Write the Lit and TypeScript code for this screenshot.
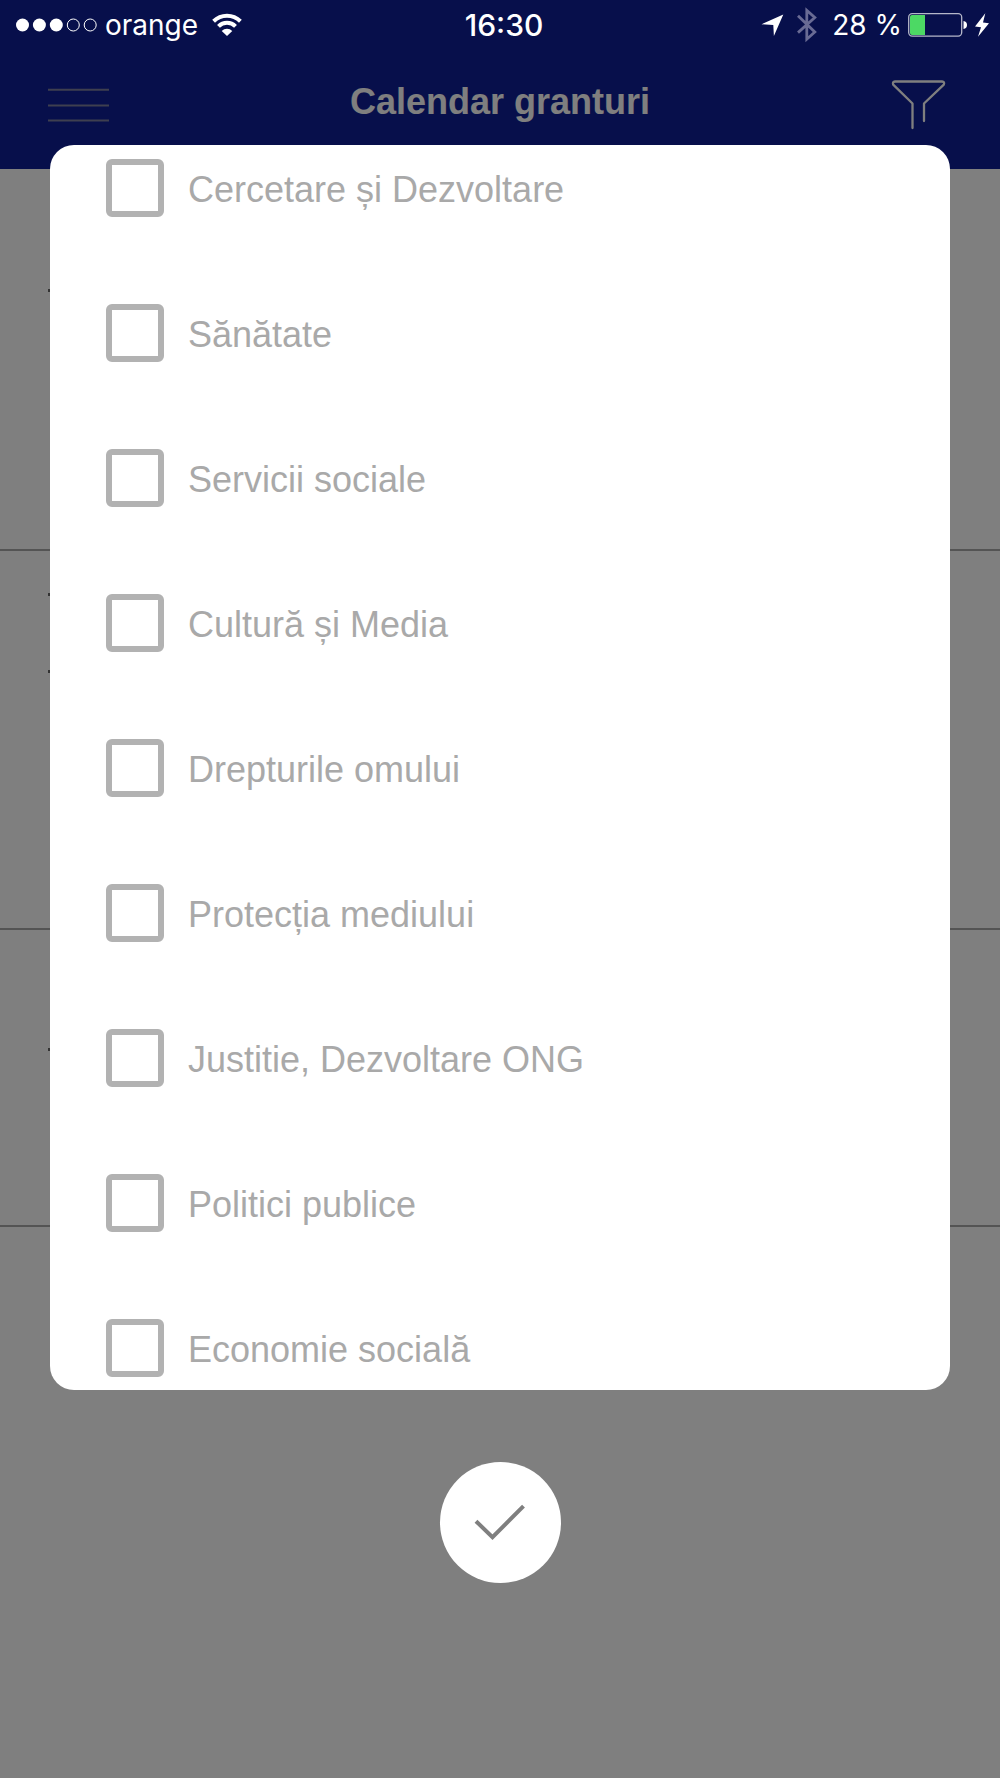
import { LitElement, html, css } from "lit";
import { customElement, property, state } from "lit/decorators.js";

@customElement("status-bar")
class StatusBar extends LitElement {
  static styles = css`
    :host {
      display: grid;
      grid-template-columns: 1fr auto 1fr;
      align-items: center;
      height: 50px;
      padding: 0 11px 0 16px;
      box-sizing: border-box;
      color: #fff;
      font: 400 28px/50px Inter, Roboto, sans-serif;
    }
    .side {
      display: flex;
      align-items: center;
    }
    .end {
      justify-content: flex-end;
    }
    .carrier {
      margin: 0 14px 0 8px;
    }
    .time {
      padding-left: 3px;
      font-size: 30px;
      font-weight: 500;
    }
    .bluetooth {
      margin: 0 14px 0 12px;
    }
    .battery {
      margin: 0 7px 0 6px;
    }
    svg {
      display: block;
      flex: none;
    }
  `;

  render() {
    return html`
      <div class="side">
        <svg width="81" height="14" viewBox="0 0 81 14" aria-label="Semnal">
          <g fill="#fff">
            <circle cx="6.5" cy="7" r="6.5" />
            <circle cx="23.4" cy="7" r="6.5" />
            <circle cx="40.3" cy="7" r="6.5" />
          </g>
          <g fill="none" stroke="#fff" stroke-width="1">
            <circle cx="57.3" cy="7" r="6" />
            <circle cx="74.2" cy="7" r="6" />
          </g>
        </svg>
        <span class="carrier">orange</span>
        <svg width="30" height="24" viewBox="0 0 30 24" aria-label="Wi-Fi">
          <g fill="none" stroke="#fff" stroke-width="4">
            <path d="M1.6 8.2A19.2 19.2 0 0 1 28.4 8.2" />
            <path d="M6.5 13.4A12 12 0 0 1 23.5 13.4" />
          </g>
          <path d="M15 23L9.7 17.9A7.6 7.6 0 0 1 20.3 17.9Z" fill="#fff" />
        </svg>
      </div>
      <span class="time">16:30</span>
      <div class="side end">
        <svg width="23" height="23" viewBox="0 0 23 23" aria-label="Localizare">
          <path d="M.5 10.3L22.3 .5L12.9 22L12.3 11Z" fill="#fff" />
        </svg>
        <svg class="bluetooth" width="22" height="36" viewBox="0 0 22 36" aria-label="Bluetooth">
          <path d="M2 8.7L18.8 25L10.8 32.2V3.4L18.8 10.5L2 25.6" fill="none" stroke="#696b94" stroke-width="2.8" />
        </svg>
        <span>28 %</span>
        <svg class="battery" width="60" height="24" viewBox="0 0 60 24" aria-label="Baterie">
          <rect x=".7" y=".7" width="53" height="22.4" rx="3.5" fill="none" stroke="#b5b7c9" stroke-width="1.3" />
          <path d="M4 2H17V22H4Q2 22 2 20V4Q2 2 4 2Z" fill="#4cd964" />
          <path d="M55.5 8Q59 8.5 59 12T55.5 16Z" fill="#fff" />
        </svg>
        <svg width="14" height="24" viewBox="0 0 14 24" aria-label="Se incarca">
          <path d="M10.3 .3L0 13.4L6 14.2L3 23.7L14 10.3L8 9.6Z" fill="#fff" />
        </svg>
      </div>
    `;
  }
}

@customElement("filter-option")
class FilterOption extends LitElement {
  @property() label = "";

  static styles = css`
    :host {
      display: block;
    }
    .option {
      display: flex;
      align-items: center;
      gap: 24px;
      color: #a9a9a9;
      font: 36px/54px "Liberation Sans", Arial, sans-serif;
    }
    .box {
      appearance: none;
      flex: none;
      box-sizing: border-box;
      width: 58px;
      height: 58px;
      margin: 0;
      border: 6px solid #b2b2b2;
      border-radius: 6px;
      background: #fff;
    }
    .box:checked {
      background: #b2b2b2;
    }
    .text {
      padding-top: 4px;
    }
  `;

  render() {
    return html`
      <label class="option">
        <input class="box" type="checkbox" />
        <span class="text">${this.label}</span>
      </label>
    `;
  }
}

@customElement("app-root")
class AppRoot extends LitElement {
  @state() private options = [
    "Cercetare și Dezvoltare",
    "Sănătate",
    "Servicii sociale",
    "Cultură și Media",
    "Drepturile omului",
    "Protecția mediului",
    "Justitie, Dezvoltare ONG",
    "Politici publice",
    "Economie socială",
  ];

  static styles = css`
    :host {
      display: block;
      position: relative;
      min-height: 100vh;
      background: #fff;
      font-family: "Liberation Sans", Arial, sans-serif;
    }
    .top {
      background: #0f1f96;
      padding-bottom: 15px;
    }
    .status {
      position: relative;
      z-index: 2;
    }
    .nav {
      display: grid;
      grid-template-columns: 1fr auto 1fr;
      align-items: center;
      height: 104px;
      padding: 0 54px 0 48px;
    }
    .title {
      margin: 0;
      padding-left: 6px;
      color: #fff;
      font: bold 36px/100px "Liberation Sans", Arial, sans-serif;
    }
    button {
      display: block;
      padding: 0;
      border: 0;
      background: none;
      cursor: pointer;
    }
    svg {
      display: block;
    }
    .menu,
    .filter {
      padding-top: 5px;
    }
    .filter {
      justify-self: end;
    }
    .entry {
      box-sizing: border-box;
      display: flex;
      flex-direction: column;
      gap: 74px;
      height: 379px;
      padding: 42px 48px 0;
      border-bottom: 2px solid #a8a8a8;
    }
    .single {
      height: 382px;
      padding-top: 120px;
    }
    .short {
      height: 297px;
      padding-top: 118px;
    }
    .mark {
      width: 3px;
      height: 3px;
      background: #666;
    }
    .overlay {
      position: absolute;
      inset: 0;
      z-index: 1;
      display: flex;
      flex-direction: column;
      align-items: center;
      gap: 72px;
      padding: 145px 50px 0;
      background: rgba(0, 0, 0, 0.5);
    }
    .panel {
      align-self: stretch;
      display: flex;
      flex-direction: column;
      gap: 87px;
      padding: 14px 56px 13px;
      border-radius: 24px;
      background: #fff;
    }
    .confirm {
      display: grid;
      place-items: center;
      width: 121px;
      height: 121px;
      border-radius: 50%;
      background: #fff;
    }
  `;

  render() {
    return html`
      <header class="top">
        <status-bar class="status"></status-bar>
        <div class="nav">
          <button class="menu" aria-label="Meniu">
            <svg width="61" height="36" viewBox="0 0 61 36">
              <path d="M0 2.7H61M0 18.5H61M0 33.5H61" stroke="#7c7f9f" stroke-width="2" />
            </svg>
          </button>
          <h1 class="title">Calendar granturi</h1>
          <button class="filter" aria-label="Filtru">
            <svg width="55" height="50" viewBox="0 0 55 50">
              <path
                d="M21.5 48V23.5L2.2 4.6Q1.2 1.6 4 1.5H51Q54 1.6 52.8 4.6L33 23.5V41"
                fill="none" stroke="#fff" stroke-width="2.3" stroke-linecap="round" stroke-linejoin="round"
              />
            </svg>
          </button>
        </div>
      </header>
      <main>
        <div class="entry single"><div class="mark"></div></div>
        <div class="entry"><div class="mark"></div><div class="mark"></div></div>
        <div class="entry single short"><div class="mark"></div></div>
      </main>
      <div class="overlay" role="dialog" aria-label="Filtru">
        <div class="panel">
          ${this.options.map((o) => html`<filter-option .label=${o}></filter-option>`)}
        </div>
        <button class="confirm" aria-label="Confirmare">
          <svg width="52" height="38" viewBox="0 0 52 38">
            <path d="M2 17.2L18.5 33.2L49.5 2.2" fill="none" stroke="#7f7f7f" stroke-width="4" />
          </svg>
        </button>
      </div>
    `;
  }
}
